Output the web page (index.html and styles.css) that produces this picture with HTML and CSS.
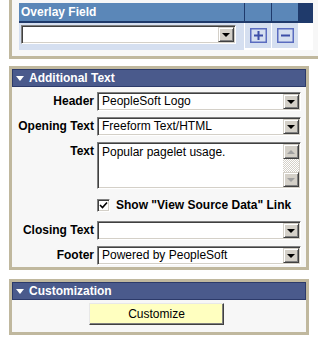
FILE: index.html
```html
<!DOCTYPE html>
<html lang="en">

<head>
    <meta charset="UTF-8">
    <title>Pagelet Options</title>
    <link rel="stylesheet" href="styles.css">
</head>

<body>

    <!-- overlay grid (top of panel is cut off) -->
    <div class="panel cut">
        <div class="grid-head">
            <div class="gh">Overlay Field</div>
            <div class="gh"></div>
            <div class="gh"></div>
        </div>
        <div class="grid-row">
            <div class="gc">
                <div class="select wide">
                    <span class="value"></span>
                    <span class="drop"><i class="tri"></i></span>
                </div>
            </div>
            <div class="gc">
                <svg class="icon" width="17" height="15" viewBox="0 0 17 15">
                    <rect x="0.75" y="0.75" width="15.5" height="13.5" fill="none" stroke="#5a6cc0" stroke-width="1.5" />
                    <path d="M8.5 3v9M4 7.5h9" stroke="#3d4fa8" stroke-width="2" />
                </svg>
            </div>
            <div class="gc">
                <svg class="icon" width="17" height="15" viewBox="0 0 17 15">
                    <rect x="0.75" y="0.75" width="15.5" height="13.5" fill="none" stroke="#5a6cc0" stroke-width="1.5" />
                    <path d="M4 7.5h9" stroke="#3d4fa8" stroke-width="2" />
                </svg>
            </div>
        </div>
    </div>

    <div class="panel">
        <div class="bar"><i class="arrow"></i>Additional Text</div>
        <div class="form">
            <label>Header</label>
            <div class="select"><span class="value">PeopleSoft Logo</span><span class="drop"><i class="tri"></i></span></div>

            <label>Opening Text</label>
            <div class="select"><span class="value">Freeform Text/HTML</span><span class="drop"><i class="tri"></i></span></div>

            <label class="top">Text</label>
            <div class="textarea">
                <span class="value">Popular pagelet usage.</span>
                <span class="scroll">
                    <span class="sbtn"><i class="up"></i></span>
                    <span class="track"></span>
                    <span class="sbtn"><i class="down"></i></span>
                </span>
            </div>

            <span></span>
            <div class="check-row">
                <span class="checkbox">
                    <svg width="9" height="9" viewBox="0 0 9 9">
                        <path d="M1 4l2.5 2.5L8 1.5" fill="none" stroke="#000" stroke-width="1.6" />
                    </svg>
                </span>
                Show "View Source Data" Link
            </div>

            <label>Closing Text</label>
            <div class="select"><span class="value"></span><span class="drop"><i class="tri"></i></span></div>

            <label>Footer</label>
            <div class="select"><span class="value">Powered by PeopleSoft</span><span class="drop"><i class="tri"></i></span></div>
        </div>
    </div>

    <div class="panel last">
        <div class="bar"><i class="arrow"></i>Customization</div>
        <div class="actions">
            <button>Customize</button>
        </div>
    </div>

</body>

</html>
```

FILE: styles.css
```css
body {
    margin: 0;
    padding: 0 9px;
    font-family: "Liberation Sans", Arial, sans-serif;
    font-size: 12px;
    background-color: #fff;
}

.panel {
    width: 294px;
    border: 3px solid #c0b89e;
    background-color: #f7f7f7;
    margin-bottom: 7px;
}

.panel.cut {
    border-top: none;
    padding: 3px 8px 6px 7px;
}

.panel.last {
    margin-top: 9px;
}

/* grid */
.grid-head,
.grid-row {
    display: grid;
    grid-template-columns: 225px 26px 26px;
    column-gap: 1px;
}

.grid-head {
    background-color: #1f3a6b;
    padding-bottom: 2px;
}

.grid-row {
    background-color: #fff;
}

.gh {
    height: 18px;
    line-height: 18px;
    background-color: #5b87b8;
    color: #fff;
    font-weight: bold;
    padding-left: 2px;
}

.gc {
    height: 25px;
    background-color: #d5dff0;
    display: flex;
    align-items: center;
    justify-content: center;
}

.gc:first-child {
    display: block;
    padding: 2px 0 0 2px;
}

.select.wide {
    width: 215px;
}

/* section bar */
.bar {
    height: 16px;
    line-height: 16px;
    border: 1px solid #2c3a6a;
    background-color: #4a5a8c;
    color: #fff;
    font-weight: bold;
    display: flex;
    align-items: center;
    padding-left: 3px;
}

.arrow {
    width: 0;
    height: 0;
    border-left: 4px solid transparent;
    border-right: 4px solid transparent;
    border-top: 5px solid #fff;
    margin-right: 5px;
}

/* form */
.form {
    display: grid;
    grid-template-columns: 82px 204px;
    column-gap: 3px;
    row-gap: 6px;
    padding: 5px 0 2px 0;
}

.form label {
    font-weight: bold;
    text-align: right;
    line-height: 19px;
}

.select {
    height: 19px;
    box-sizing: border-box;
    display: flex;
    background-color: #fff;
    border-style: solid;
    border-width: 1px;
    border-color: #808080 #fff #fff #808080;
    box-shadow: inset 1px 1px #404040, inset -1px -1px #d4d0c8;
    padding: 1px;
}

.value {
    flex: 1;
    padding-left: 3px;
    line-height: 15px;
    white-space: nowrap;
    overflow: hidden;
}

.drop,
.sbtn {
    width: 16px;
    box-sizing: border-box;
    background-color: #d4d0c8;
    border-style: solid;
    border-width: 1px;
    border-color: #d4d0c8 #404040 #404040 #d4d0c8;
    box-shadow: inset 1px 1px #fff, inset -1px -1px #808080;
    display: flex;
    align-items: center;
    justify-content: center;
}

.tri {
    width: 0;
    height: 0;
    border-left: 4px solid transparent;
    border-right: 4px solid transparent;
    border-top: 4px solid #000;
}

.textarea {
    height: 47px;
    box-sizing: border-box;
    display: flex;
    background-color: #fff;
    border-style: solid;
    border-width: 1px;
    border-color: #808080 #fff #fff #808080;
    box-shadow: inset 1px 1px #404040, inset -1px -1px #d4d0c8;
    padding: 1px;
}

.textarea .value {
    padding-top: 1px;
}

.scroll {
    width: 16px;
    display: flex;
    flex-direction: column;
}

.sbtn {
    height: 15px;
}

.track {
    flex: 1;
    background-color: #eeeeee;
    background-image: repeating-conic-gradient(#d4d0c8 0 25%, #fff 0 50%);
    background-size: 2px 2px;
}

.up,
.down {
    width: 0;
    height: 0;
    border-left: 4px solid transparent;
    border-right: 4px solid transparent;
}

.up {
    border-bottom: 4px solid #a0a0a0;
}

.down {
    border-top: 4px solid #a0a0a0;
}

.check-row {
    height: 20px;
    display: flex;
    align-items: center;
    font-weight: bold;
    white-space: nowrap;
}

.checkbox {
    width: 13px;
    height: 13px;
    box-sizing: border-box;
    background-color: #fff;
    border-style: solid;
    border-width: 1px;
    border-color: #808080 #fff #fff #808080;
    box-shadow: inset 1px 1px #404040, inset -1px -1px #d4d0c8;
    display: flex;
    align-items: center;
    justify-content: center;
    margin-right: 6px;
}

/* customize */
.actions {
    padding: 3px 0 7px 77px;
}

button {
    width: 135px;
    height: 22px;
    font-family: "Liberation Sans", Arial, sans-serif;
    font-size: 12px;
    color: #000;
    background-color: #ffffc0;
    border-style: solid;
    border-width: 1px;
    border-color: #e8e8e8 #404040 #404040 #e8e8e8;
    box-shadow: inset -1px -1px #808080;
    padding: 0;
}
```
